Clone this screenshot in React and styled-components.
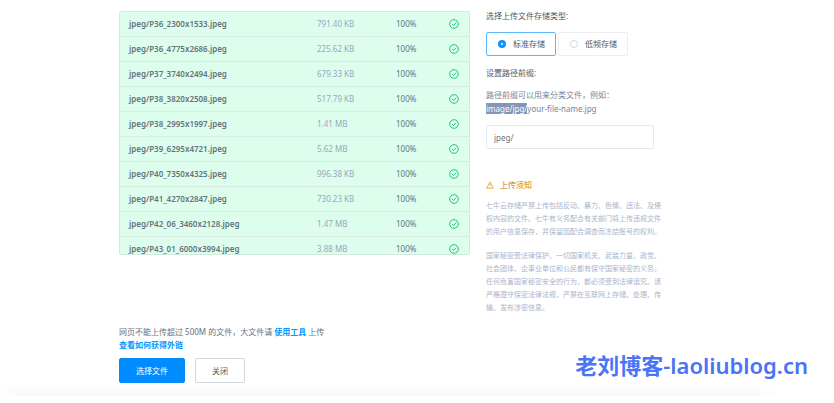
import React, { useState } from "react";
import styled, { createGlobalStyle } from "styled-components";

const GlobalStyle = createGlobalStyle`
  * {
    box-sizing: border-box;
  }

  body {
    margin: 0;
    background: #fff;
    color: #68717f;
    font-family: "Noto Sans", "Noto Sans CJK SC", sans-serif;
    font-size: 8px;
    line-height: 14px;
  }
`;

const Page = styled.div`
  position: relative;
  display: flex;
  flex-direction: column;
  min-height: 100vh;
`;

const Main = styled.main`
  padding: 11px 120px 0 119px;
`;

const Columns = styled.div`
  display: flex;
  align-items: flex-start;
  gap: 16px;
`;

const FileList = styled.div`
  flex: 1;
  height: 244px;
  overflow: hidden;
  border: 1px solid #d3e8df;
  border-radius: 2px;
  background: #ddfeec;
`;

const FileTable = styled.table`
  width: 100%;
  border-spacing: 0;
  table-layout: fixed;
`;

const Cell = styled.td`
  width: ${(props) => props.$width || "auto"};
  height: 25px;
  padding: 0 0 0 ${(props) => (props.$first ? "9px" : "0")};
  border-bottom: 1px solid #d9ebe4;
  color: ${(props) => props.$color || "#66727c"};
  font-weight: ${(props) => (props.$first ? 600 : 400)};
  white-space: nowrap;

  svg {
    display: block;
  }
`;

const Aside = styled.aside`
  width: 228px;
`;

const Heading = styled.h2`
  display: block;
  margin: 0;
  color: #505762;
  font-size: 8px;
  font-weight: 400;
  line-height: 10px;
`;

const StorageTypes = styled.div`
  display: flex;
  gap: 2px;
  margin: 11px 0 12px;
`;

const StorageOption = styled.label`
  display: flex;
  align-items: center;
  gap: 7px;
  width: 70px;
  height: 24px;
  padding-left: 11px;
  border: 1px solid ${(props) => (props.$checked ? "#5cb8ff" : "#eceef2")};
  border-radius: 2px;
  color: #505762;
`;

const Radio = styled.input`
  appearance: none;
  width: 8px;
  height: 8px;
  margin: 0;
  border: 1px solid #d3d6dc;
  border-radius: 50%;
  background: #fff;

  &:checked {
    border: 3px solid #0a95ff;
  }
`;

const Hint = styled.p`
  margin: 10px 0 9px;
  color: #7a8499;
`;

const Selected = styled.span`
  background: #8496b5;
  color: #fff;
`;

const PrefixInput = styled.input`
  display: block;
  width: 168px;
  height: 24px;
  padding: 0 7px;
  border: 1px solid #e6e8ec;
  border-radius: 2px;
  color: #68717f;
  font: inherit;
`;

const NoticeTitle = styled.h3`
  display: flex;
  align-items: center;
  gap: 6px;
  margin: 29px 0 7px;
  color: #dca03a;
  font-size: 8px;
  font-weight: 500;
  line-height: 14px;
`;

const NoticeText = styled.p`
  width: 176px;
  margin: 0;
  color: #a9b4cb;
  font-size: 7px;
  line-height: 13px;

  & + & {
    margin-top: 11px;
  }
`;

const Tips = styled.p`
  margin: 11px 0 7px;
  line-height: 13px;
`;

const TipLink = styled.a`
  color: #0a95ff;
  font-weight: 600;
  text-decoration: none;
`;

const Actions = styled.div`
  display: flex;
  gap: 10px;
`;

const Button = styled.button`
  height: 25px;
  padding: 0 16px;
  border: 1px solid ${(props) => (props.$primary ? "#008cff" : "#d3d6da")};
  border-radius: 2px;
  background: ${(props) => (props.$primary ? "#008cff" : "#fff")};
  color: ${(props) => (props.$primary ? "#fff" : "#505762")};
  font: inherit;
`;

const BottomShade = styled.div`
  height: 12px;
  margin: 1px 54px 0 0;
  background:
    linear-gradient(to right, #fff, transparent 20px calc(100% - 28px), #fff),
    linear-gradient(#fefefe, #f8f8f8);
`;

const Watermark = styled.div`
  position: absolute;
  right: 26px;
  bottom: 18px;
  color: #4a74f6;
  font-size: 22px;
  font-weight: 600;
  line-height: 40px;
`;

const files = [
  { name: "jpeg/P36_2300x1533.jpeg", size: "791.40 KB" },
  { name: "jpeg/P36_4775x2686.jpeg", size: "225.62 KB" },
  { name: "jpeg/P37_3740x2494.jpeg", size: "679.33 KB" },
  { name: "jpeg/P38_3820x2508.jpeg", size: "517.79 KB" },
  { name: "jpeg/P38_2995x1997.jpeg", size: "1.41 MB" },
  { name: "jpeg/P39_6295x4721.jpeg", size: "5.62 MB" },
  { name: "jpeg/P40_7350x4325.jpeg", size: "996.38 KB" },
  { name: "jpeg/P41_4270x2847.jpeg", size: "730.23 KB" },
  { name: "jpeg/P42_06_3460x2128.jpeg", size: "1.47 MB" },
  { name: "jpeg/P43_01_6000x3994.jpeg", size: "3.88 MB" },
];

const storageTypes = ["标准存储", "低频存储"];

function DoneIcon() {
  return (
    <svg width="10" height="10" viewBox="0 0 10 10" fill="none" stroke="#1fc677">
      <circle cx="5" cy="5" r="4.3" />
      <path d="M3 5.1 4.5 6.5 7.1 3.7" />
    </svg>
  );
}

function WarningIcon() {
  return (
    <svg width="8" height="8" viewBox="0 0 8 8" fill="none" stroke="#dca03a" strokeWidth="0.8">
      <path d="M4 0.8 7.5 7.2H0.5Z" strokeLinejoin="round" />
      <path d="M4 3v2.2M4 5.8v0.8" />
    </svg>
  );
}

function App() {
  const [storage, setStorage] = useState(storageTypes[0]);
  const [prefix, setPrefix] = useState("jpeg/");

  return (
    <Page>
      <GlobalStyle />
      <Main>
        <Columns>
          <FileList>
            <FileTable>
              <tbody>
                {files.map((file) => (
                  <tr key={file.name}>
                    <Cell $first>{file.name}</Cell>
                    <Cell $width="79px" $color="#98a6bf">{file.size}</Cell>
                    <Cell $width="53px">100%</Cell>
                    <Cell $width="20px"><DoneIcon /></Cell>
                  </tr>
                ))}
              </tbody>
            </FileTable>
          </FileList>
          <Aside>
            <Heading>选择上传文件存储类型:</Heading>
            <StorageTypes>
              {storageTypes.map((type) => (
                <StorageOption key={type} $checked={storage === type}>
                  <Radio
                    type="radio"
                    name="storage"
                    checked={storage === type}
                    onChange={() => setStorage(type)}
                  />
                  {type}
                </StorageOption>
              ))}
            </StorageTypes>
            <Heading as="label" htmlFor="prefix">设置路径前缀:</Heading>
            <Hint>
              路径前缀可以用来分类文件，例如：
              <br />
              <Selected>image/jpg/</Selected>your-file-name.jpg
            </Hint>
            <PrefixInput
              id="prefix"
              value={prefix}
              onChange={(evt) => setPrefix(evt.target.value)}
            />
            <NoticeTitle>
              <WarningIcon />
              上传须知
            </NoticeTitle>
            <NoticeText>
              七牛云存储严禁上传包括反动、暴力、色情、违法、及侵权内容的文件。七牛有义务配合有关部门将上传违规文件的用户信息保存，并保留因配合调查而冻结账号的权利。
            </NoticeText>
            <NoticeText>
              国家秘密受法律保护。一切国家机关、武装力量、政党、社会团体、企事业单位和公民都有保守国家秘密的义务。任何危害国家秘密安全的行为，都必须受到法律追究。请严格遵守保密法律法规，严禁在互联网上存储、处理、传输、发布涉密信息。
            </NoticeText>
          </Aside>
        </Columns>
        <Tips>
          网页不能上传超过 500M 的文件，大文件请 <TipLink href="#tools">使用工具</TipLink> 上传
          <br />
          <TipLink href="#links">查看如何获得外链</TipLink>
        </Tips>
        <Actions>
          <Button type="button" $primary>选择文件</Button>
          <Button type="button">关闭</Button>
        </Actions>
      </Main>
      <BottomShade />
      <Watermark>老刘博客-laoliublog.cn</Watermark>
    </Page>
  );
}

export default App;
